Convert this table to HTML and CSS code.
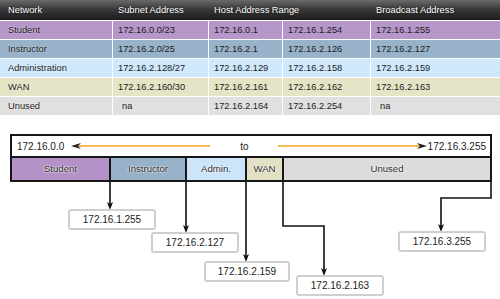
FILE: index.html
```html
<!DOCTYPE html>
<html>
<head>
<meta charset="utf-8">
<link rel="stylesheet" href="styles.css">
</head>
<body>
<div class="table">
  <div class="thead">
    <div class="th first">Network</div>
    <div class="th">Subnet Address</div>
    <div class="th span2">Host Address Range</div>
    <div class="th">Broadcast Address</div>
  </div>
  <div class="row student">
    <div class="td first">Student</div>
    <div class="td">172.16.0.0/23</div>
    <div class="td">172.16.0.1</div>
    <div class="td">172.16.1.254</div>
    <div class="td">172.16.1.255</div>
  </div>
  <div class="row instructor">
    <div class="td first">Instructor</div>
    <div class="td">172.16.2.0/25</div>
    <div class="td">172.16.2.1</div>
    <div class="td">172.16.2.126</div>
    <div class="td">172.16.2.127</div>
  </div>
  <div class="row admin">
    <div class="td first">Administration</div>
    <div class="td">172.16.2.128/27</div>
    <div class="td">172.16.2.129</div>
    <div class="td">172.16.2.158</div>
    <div class="td">172.16.2.159</div>
  </div>
  <div class="row wan">
    <div class="td first">WAN</div>
    <div class="td">172.16.2.160/30</div>
    <div class="td">172.16.2.161</div>
    <div class="td">172.16.2.162</div>
    <div class="td">172.16.2.163</div>
  </div>
  <div class="row unused">
    <div class="td first">Unused</div>
    <div class="td na">na</div>
    <div class="td">172.16.2.164</div>
    <div class="td">172.16.2.254</div>
    <div class="td na">na</div>
  </div>
</div>

<div class="diagram">
  <div class="bar">
    <div class="range">
      <span class="addr-start">172.16.0.0</span>
      <svg class="arrow-left" width="139" height="8" viewBox="0 0 139 8">
        <line x1="5" y1="4" x2="139" y2="4" stroke="#f5a31b" stroke-width="1.6"/>
        <polygon points="0,4 10,1 7,4 10,7" fill="#222"/>
      </svg>
      <span class="to">to</span>
      <svg class="arrow-right" width="149" height="8" viewBox="0 0 149 8">
        <line x1="0" y1="4" x2="143" y2="4" stroke="#f5a31b" stroke-width="1.6"/>
        <polygon points="149,4 139,1 142,4 139,7" fill="#222"/>
      </svg>
      <span class="addr-end">172.16.3.255</span>
    </div>
    <div class="segments">
      <div class="seg s-student">Student</div>
      <div class="seg s-instructor">Instructor</div>
      <div class="seg s-admin">Admin.</div>
      <div class="seg s-wan">WAN</div>
      <div class="seg s-unused">Unused</div>
    </div>
  </div>

  <svg class="links" width="500" height="184" viewBox="0 115 500 184">
    <g fill="none" stroke="#111" stroke-width="1.6">
      <path d="M110 182 V204"/>
      <path d="M186 182 V227"/>
      <path d="M246 182 V256"/>
      <path d="M283 182 V226 H324 V270"/>
      <path d="M491 182 V198 H441 V226"/>
    </g>
    <g fill="#111">
      <polygon points="107,202 110,210 113,202 110,204"/>
      <polygon points="183,225 186,233 189,225 186,227"/>
      <polygon points="243,254 246,262 249,254 246,256"/>
      <polygon points="321,268 324,276 327,268 324,270"/>
      <polygon points="438,224 441,232 444,224 441,226"/>
    </g>
  </svg>

  <div class="node n1">172.16.1.255</div>
  <div class="node n2">172.16.2.127</div>
  <div class="node n3">172.16.2.159</div>
  <div class="node n4">172.16.2.163</div>
  <div class="node n5">172.16.3.255</div>
</div>
</body>
</html>
```

FILE: styles.css
```css
html, body {
  margin: 0;
  padding: 0;
  background: #fff;
}
body {
  width: 500px;
  height: 299px;
  overflow: hidden;
  font-family: "Liberation Sans", Arial, sans-serif;
  color: #1c1c1c;
}

/* ---------- table ---------- */
.table {
  display: flex;
  flex-direction: column;
  gap: 1px;
}
.thead,
.row {
  display: grid;
  grid-template-columns: 112px 95px 73px 87px 1fr;
  column-gap: 1px;
}
.thead {
  height: 20px;
  background: linear-gradient(#6a6a6a 0%, #3a3a3a 45%, #1c1c1c 100%);
}
.th {
  color: #fff;
  font-size: 9.3px;
  line-height: 20px;
  padding-left: 5px;
  text-shadow: 0 0 2px rgba(0,0,0,0.8);
}
.th.span2 { grid-column: span 2; }
.th.first, .td.first { padding-left: 8px; }

.row { height: 18px; }
.td {
  font-size: 9.3px;
  line-height: 18px;
  padding-left: 5px;
  white-space: nowrap;
}
.td.first { text-shadow: 0 0 2px rgba(255,255,255,0.7); }
.td.na { padding-left: 9px; }

.student .td { background: #b697ca; }
.instructor .td { background: #98b2c9; }
.admin .td { background: #d0e8fc; }
.wan .td { background: #e5e4c7; }
.unused .td { background: #e0e0e0; }

/* ---------- diagram ---------- */
.diagram {
  position: relative;
  height: 184px;
  padding-top: 19px;
  box-sizing: border-box;
}
.bar {
  margin-left: 10px;
  width: 478px;
  border: 2px solid #161616;
  display: flex;
  flex-direction: column;
}
.range {
  height: 20px;
  display: flex;
  align-items: center;
  font-size: 10px;
  color: #222;
  background: #fff;
  border-bottom: 2px solid #161616;
}
.addr-start { margin-left: 5px; }
.arrow-left { margin-left: 7px; }
.to { margin-left: 30px; }
.arrow-right { margin-left: 29px; }
.addr-end { margin-left: 1px; }

.segments {
  height: 22px;
  display: flex;
}
.seg {
  font-size: 9.6px;
  line-height: 22px;
  text-align: center;
  color: #2a2a2a;
  text-shadow: 0 0 2px #fff, 0 0 2px #fff;
  border-right: 2px solid #161616;
}
.seg:last-child { border-right: none; }
.s-student { width: 97px; background: #b492c8; }
.s-instructor { width: 74px; background: #97b1c8; }
.s-admin { width: 58px; background: #cde5fb; }
.s-wan { width: 35px; background: #e1e0c3; }
.s-unused { flex: 1; background: #dcdcdc; }

.links {
  position: absolute;
  left: 0;
  top: 0;
}

.node {
  position: absolute;
  width: 84px;
  height: 17px;
  border: 2px solid #cfcfcf;
  border-radius: 3px;
  background: #fff;
  font-size: 10px;
  line-height: 17px;
  text-align: center;
  color: #222;
}
.n1 { left: 68px; top: 94px; }
.n2 { left: 151px; top: 117px; }
.n3 { left: 204px; top: 146px; width: 82px; }
.n4 { left: 296px; top: 160px; }
.n5 { left: 398px; top: 116px; }
```
